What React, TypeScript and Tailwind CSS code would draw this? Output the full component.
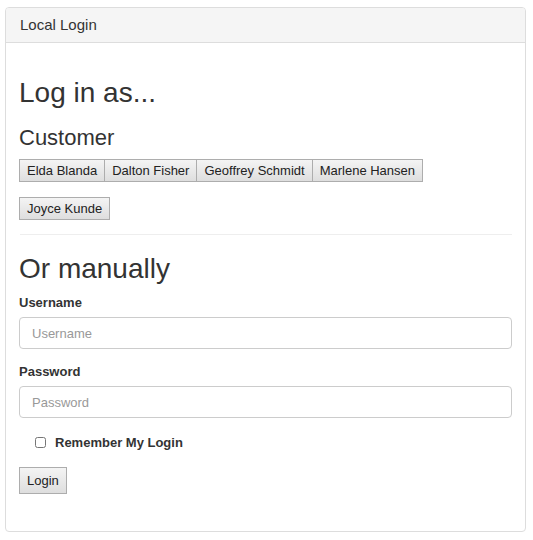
const customers = ["Elda Blanda", "Dalton Fisher", "Geoffrey Schmidt", "Marlene Hansen", "Joyce Kunde"];

const btn =
  "h-[23px] px-[7px] text-[13px] leading-[15px] text-[#222] border border-[#adadad] bg-gradient-to-b from-[#f4f4f4] to-[#dedede] -ml-px first:ml-0";

export default function App() {
  return (
    <div className="font-['Liberation_Sans',Arial,sans-serif] text-[#333] bg-white min-h-[540px] pt-[7px] pl-[5px]">
      <div className="w-[521px] h-[525px] border border-[#ddd] rounded-[4px] overflow-hidden">
        <div className="h-[35px] bg-[#f5f5f5] border-b border-[#ddd] px-[14px] flex items-center text-[15px]">
          Local Login
        </div>
        <div className="px-[13px]">
          <h1 className="mt-[34px] text-[28px] leading-[31px]">Log in as...</h1>
          <h3 className="mt-[18px] text-[22px] leading-[24px]">Customer</h3>
          <div className="mt-[9px] flex flex-wrap gap-y-[15px]">
            {customers.slice(0, 4).map((c) => (
              <button key={c} className={btn}>
                {c}
              </button>
            ))}
          </div>
          <div className="mt-[15px] flex">
            <button className={btn}>{customers[4]}</button>
          </div>
          <hr className="mt-[14px] ml-px border-t border-[#eee]" />
          <h2 className="mt-[18px] text-[28px] leading-[31px]">Or manually</h2>
          <label className="block mt-[11px] text-[13px] leading-[15px] font-bold">Username</label>
          <input
            placeholder="Username"
            className="mt-[7px] w-full h-[32px] border border-[#ccc] rounded-[4px] px-[12px] text-[13px] placeholder:text-[#999] outline-none"
          />
          <label className="block mt-[15px] text-[13px] leading-[15px] font-bold">Password</label>
          <input
            type="password"
            placeholder="Password"
            className="mt-[7px] w-full h-[32px] border border-[#ccc] rounded-[4px] px-[12px] text-[13px] placeholder:text-[#999] outline-none"
          />
          <div className="mt-[17px] flex items-center pl-[16px]">
            <input type="checkbox" className="w-[11px] h-[11px] m-0" />
            <span className="ml-[9px] text-[13px] leading-[15px] font-bold">Remember My Login</span>
          </div>
          <button className="mt-[17px] h-[27px] px-[7px] text-[13px] text-[#222] border border-[#adadad] bg-gradient-to-b from-[#f4f4f4] to-[#dedede]">
            Login
          </button>
        </div>
      </div>
    </div>
  );
}
